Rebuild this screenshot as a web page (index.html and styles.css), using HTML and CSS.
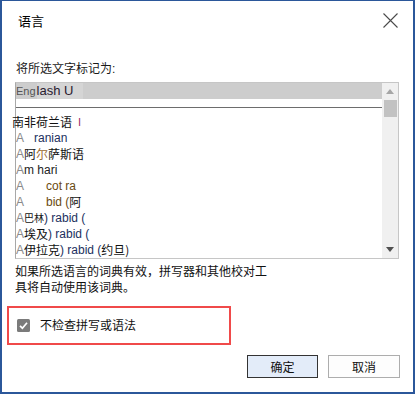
FILE: index.html
```html
<!DOCTYPE html>
<html lang="zh-CN">
<head>
<meta charset="utf-8">
<title>语言</title>
<link rel="stylesheet" href="styles.css">
</head>
<body>
<div class="dialog">
  <div class="header">
    <div class="title">语言</div>
    <svg class="close" width="15" height="15" viewBox="0 0 15 15"><path d="M0.5 0.5 L14.5 14.5 M14.5 0.5 L0.5 14.5" stroke="#4a4a4a" stroke-width="1.1" fill="none"/></svg>
  </div>
  <div class="label">将所选文字标记为:</div>
  <div class="listbox">
    <div class="list">
      <div class="selected"><span class="eng">Eng</span><span class="lash">lash U</span></div>
      <div class="sep"></div>
      <div class="row"><span class="cjk shift">南非荷兰语</span><span class="bar">I</span></div>
      <div class="row"><span class="a">A</span><span class="blue gap1">ranian</span></div>
      <div class="row"><span class="a">A</span><span class="cjk">阿<span class="orange">尔</span>萨斯语</span></div>
      <div class="row"><span class="a">A</span><span class="dark">m hari</span></div>
      <div class="row"><span class="a">A</span><span class="brown gap2">cot ra</span></div>
      <div class="row"><span class="a">A</span><span class="brown gap2">bid (</span><span class="cjk">阿</span></div>
      <div class="row"><span class="a">A</span><span class="cjk small">巴林</span><span class="blue">) rabid (</span></div>
      <div class="row"><span class="a">A</span><span class="cjk">埃及</span><span class="blue">) rabid (</span></div>
      <div class="row"><span class="a">A</span><span class="cjk">伊拉克</span><span class="blue">) rabid (</span><span class="cjk">约旦)</span></div>
    </div>
    <div class="scrollbar">
      <div class="sbtn"><svg width="8" height="5" viewBox="0 0 8 5"><polygon points="0,5 8,5 4,0" fill="#a6a6a6"/></svg></div>
      <div class="thumb"></div>
      <div class="track"></div>
      <div class="sbtn"><svg width="8" height="5" viewBox="0 0 8 5"><polygon points="0,0 8,0 4,5" fill="#505050"/></svg></div>
    </div>
  </div>
  <div class="note">如果所选语言的词典有效，拼写器和其他校对工<br>具将自动使用该词典。</div>
  <div class="highlight">
    <svg class="check" width="13" height="13" viewBox="0 0 13 13"><rect x="0" y="0" width="13" height="13" rx="1.5" fill="#7b7b7b"/><path d="M3 6.8 L5.4 9.2 L10 3.8" stroke="#fff" stroke-width="1.7" fill="none"/></svg>
    <span class="checklabel">不检查拼写或语法</span>
  </div>
  <div class="buttons">
    <div class="btn primary">确定</div>
    <div class="btn">取消</div>
  </div>
</div>
</body>
</html>
```
FILE: styles.css
```css
html, body {
  margin: 0;
  padding: 0;
  background: #ffffff;
}
.dialog {
  width: 415px;
  height: 394px;
  box-sizing: border-box;
  border: 2px solid #2b579a;
  border-top-width: 1px;
  background: #ffffff;
  display: flex;
  flex-direction: column;
  font-family: "Liberation Sans", "Noto Sans CJK SC", sans-serif;
  color: #111111;
  overflow: hidden;
}
.header {
  height: 40px;
  display: flex;
  align-items: center;
  justify-content: space-between;
  padding: 0 15px 0 16px;
}
.title {
  font-family: "Noto Sans CJK SC", sans-serif;
  font-size: 13px;
  line-height: 20px;
  color: #000;
}
.close {
  display: block;
  margin-top: -2px;
}
.label {
  margin: 20px 0 0 14px;
  font-size: 12px;
  line-height: 16px;
  color: #1a1a1a;
}
.listbox {
  margin: 5px 0 0 13px;
  width: 384px;
  height: 177px;
  box-sizing: border-box;
  border: 1px solid #c6c6c6;
  border-left-color: #a8a8a8;
  display: flex;
}
.list {
  flex: 1;
  display: flex;
  flex-direction: column;
  min-width: 0;
}
.selected {
  height: 16px;
  background: #cdcdcd;
  display: flex;
  align-items: center;
}
.eng {
  font-size: 11px;
  color: #555555;
  line-height: 16px;
}
.lash {
  font-size: 13px;
  color: #2a2030;
  line-height: 16px;
  background: #d5d5d5;
  padding-right: 10px;
  margin-left: 1px;
}
.sep {
  margin-top: 8px;
  height: 1px;
  background: #6d6d6d;
}
.row {
  height: 16px;
  line-height: 14px;
  display: flex;
  align-items: center;
  white-space: nowrap;
  font-size: 12px;
  overflow: hidden;
}
.row:first-of-type {
  margin-top: 7px;
}
.sep + .row {
  margin-top: 6px;
  overflow: visible;
}
.shift {
  margin-left: -4px;
  font-size: 11px;
}
.cjk {
  font-family: "Noto Sans CJK SC", sans-serif;
  font-size: 12px;
  color: #111;
}
.cjk.small {
  font-size: 10px;
}
.bar {
  margin-left: 6px;
  color: #a0306a;
  font-size: 11px;
}
.a {
  color: #8a8a8a;
  font-size: 12px;
  width: 8px;
}
.blue {
  color: #22305e;
  font-size: 12px;
}
.gap1 {
  margin-left: 10px;
}
.gap2 {
  margin-left: 22px;
}
.orange {
  color: #9a6a30;
}
.dark {
  color: #222;
  font-size: 12px;
}
.brown {
  color: #6a4a10;
  font-size: 12px;
}
.scrollbar {
  width: 16px;
  background: #f0f0f0;
  display: flex;
  flex-direction: column;
}
.sbtn {
  height: 17px;
  display: flex;
  align-items: center;
  justify-content: center;
}
.sbtn svg {
  display: block;
}
.thumb {
  height: 17px;
  margin: 0 1px 0 2px;
  background: #c2c2c2;
}
.track {
  flex: 1;
}
.note {
  margin: 5px 0 0 13px;
  font-size: 12px;
  line-height: 16px;
  color: #111;
}
.highlight {
  margin: 10px 0 0 5px;
  width: 224px;
  height: 39px;
  box-sizing: border-box;
  border: 2px solid #f04a4a;
  display: flex;
  align-items: center;
  padding-left: 8px;
}
.check {
  display: block;
}
.checklabel {
  margin-left: 10px;
  font-size: 12px;
  line-height: 16px;
  color: #111;
}
.buttons {
  margin-top: 10px;
  display: flex;
  justify-content: flex-end;
  gap: 10px;
  padding-right: 13px;
}
.btn {
  width: 72px;
  height: 23px;
  box-sizing: border-box;
  border: 1px solid #adadad;
  background: #fdfdfd;
  display: flex;
  align-items: center;
  justify-content: center;
  font-size: 12px;
  color: #111;
}
.btn.primary {
  width: 71px;
  border-color: #333333;
  background: #e3ecf9;
}
```
